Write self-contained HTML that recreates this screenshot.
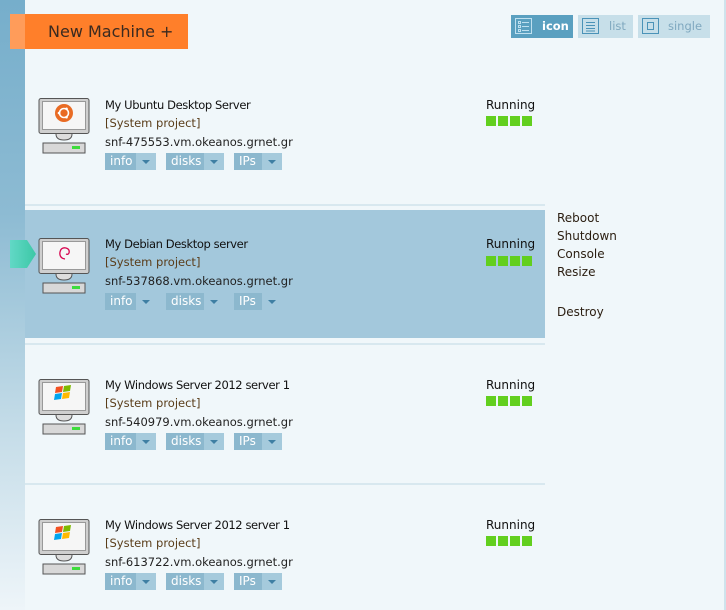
<!DOCTYPE html>
<html><head><meta charset="utf-8"><style>
*{margin:0;padding:0;box-sizing:border-box}
html,body{width:726px;height:610px;overflow:hidden}
body{background:#f0f7fa;font-family:"DejaVu Sans","Liberation Sans",sans-serif;position:relative;color:#222}
.side{position:absolute;left:0;top:0;width:25px;height:610px;background:linear-gradient(#76aecb 0%,#8dbbd3 35%,#c4dce8 70%,#eef5f9 100%)}
.rline{position:absolute;right:0;top:0;width:2px;height:610px;background:#cfe3ec}
.new{position:absolute;left:10px;top:14px;width:178px;height:35px;background:#ff7f2a;color:#3a2a20;font-size:16px;line-height:35px;padding-left:38px}
.new:before{content:"";position:absolute;left:0;top:0;width:15px;height:35px;background:#ff9c5a}
.vb{position:absolute;top:15px;height:23px;font-size:11.5px;line-height:23px;color:#7fa8bf}
.vb svg{position:absolute;left:4px;top:3px}
.sep{position:absolute;left:25px;width:520px;height:2px;background:#d8e8ef}
.row{position:absolute;left:25px;width:520px;height:128px}
.hl{background:#a3c8dc}
.mon{position:absolute;left:13px;top:28px}
.name{position:absolute;left:80px;top:27px;font-size:11.5px;letter-spacing:-0.4px;color:#111}
.proj{position:absolute;left:80px;top:45px;font-size:11.5px;color:#5a3d1a}
.host{position:absolute;left:80px;top:64px;font-size:11.5px;color:#222}
.b{position:absolute;top:82px;height:17px;font-size:12px;line-height:17px;color:#fff}
.b .l{position:absolute;left:0;top:0;height:17px;background:#8cb8ce;padding-left:5px}
.b .a{position:absolute;top:0;height:17px;width:20px;background:#a5cadc}
.b .a:after{content:"";position:absolute;left:6px;top:7px;border-left:4px solid transparent;border-right:4px solid transparent;border-top:4px solid #3f7fa3}
.hl .b .a{background:transparent}
.run{position:absolute;left:461px;top:27px;font-size:12px;color:#111}
.sq{position:absolute;left:461px;top:45px;width:46px;height:10px;background:repeating-linear-gradient(90deg,#62cf1e 0 10px,transparent 10px 12px)}
.menu{position:absolute;left:557px;font-size:12px;color:#2a1d10}
.ptr{position:absolute;left:10px;top:240px;width:26px;height:28px;z-index:5;background:linear-gradient(90deg,#62d8c6,#3cc8a6);clip-path:polygon(0 0,17px 0,26px 14px,17px 28px,0 28px)}
</style></head><body>
<div class="side"></div><div class="rline"></div>
<div class="new">New Machine +</div>
<div class="vb" style="left:511px;width:62px;background:#5aa0c0;color:#fff;font-weight:bold;padding-left:31px">icon<svg width="18" height="17"><rect x=".5" y=".5" width="16" height="15" fill="none" stroke="#bfe0ef"/><g fill="none" stroke="#bfe0ef"><rect x="3.5" y="3.5" width="2" height="2"/><rect x="3.5" y="7.5" width="2" height="2"/><rect x="3.5" y="11.5" width="2" height="2"/><path d="M7 4.5h7M7 8.5h7M7 12.5h7"/></g></svg></div>
<div class="vb" style="left:578px;width:55px;background:#c7dfe9;padding-left:31px">list<svg width="18" height="17"><rect x=".5" y=".5" width="16" height="15" fill="none" stroke="#4b93b8"/><path d="M4 4.5h9M4 7.5h9M4 10.5h9M4 13h9" stroke="#4b93b8"/></svg></div>
<div class="vb" style="left:638px;width:72px;background:#c7dfe9;padding-left:30px">single<svg width="18" height="17"><rect x=".5" y=".5" width="16" height="15" fill="none" stroke="#4b93b8"/><rect x="5.5" y="4.5" width="6" height="7" fill="none" stroke="#4b93b8"/></svg></div>

<div class="sep" style="top:204px"></div>
<div class="sep" style="top:343px"></div>
<div class="sep" style="top:483px"></div>
<div class="ptr"></div>

<div class="row" style="top:71px">
<svg class="mon" style="top:27px" width="52" height="56"><rect x="1" y=".5" width="50" height="35" rx="2" fill="#cfcfcf" stroke="#555"/><rect x="4.5" y="3.5" width="43" height="28" fill="#f6f6f6" stroke="#999"/><path d="M18 36 q0 6 8 6 q8 0 8-6" fill="#ddd" stroke="#555"/><rect x="5" y="45" width="42" height="10" fill="#d8d8d8" stroke="#555"/><rect x="34" y="48" width="8" height="3" fill="#3ddc3d"/><circle cx="26" cy="15" r="9" fill="#e96b24"/><circle cx="26" cy="15" r="4.5" fill="none" stroke="#fff" stroke-width="1.6"/><circle cx="21" cy="15" r="1.3" fill="#fff"/><circle cx="28.5" cy="10.8" r="1.3" fill="#fff"/><circle cx="28.5" cy="19.2" r="1.3" fill="#fff"/></svg>
<div class="name">My Ubuntu Desktop Server</div><div class="proj">[System project]</div><div class="host">snf-475553.vm.okeanos.grnet.gr</div>
<div class="b" style="left:80px"><span class="l" style="width:31px">info</span><span class="a" style="left:31px"></span></div>
<div class="b" style="left:141px"><span class="l" style="width:38px">disks</span><span class="a" style="left:38px"></span></div>
<div class="b" style="left:209px"><span class="l" style="width:28px">IPs</span><span class="a" style="left:28px"></span></div>
<div class="run">Running</div><div class="sq"></div></div>

<div class="row hl" style="top:210px">
<svg class="mon" width="52" height="56"><rect x="1" y=".5" width="50" height="35" rx="2" fill="#cfcfcf" stroke="#555"/><rect x="4.5" y="3.5" width="43" height="28" fill="#f6f6f6" stroke="#999"/><path d="M18 36 q0 6 8 6 q8 0 8-6" fill="#ddd" stroke="#555"/><rect x="5" y="45" width="42" height="10" fill="#d8d8d8" stroke="#555"/><rect x="34" y="48" width="8" height="3" fill="#3ddc3d"/><path d="M27 21 q-6 -1 -5 -7 q1 -5 6 -4 q4 1 3 5 q-1 2 -3 1" fill="none" stroke="#d70751" stroke-width="1.3"/></svg>
<div class="name">My Debian Desktop server</div><div class="proj">[System project]</div><div class="host">snf-537868.vm.okeanos.grnet.gr</div>
<div class="b" style="left:80px;top:83px"><span class="l" style="width:31px">info</span><span class="a" style="left:31px"></span></div>
<div class="b" style="left:141px;top:83px"><span class="l" style="width:38px">disks</span><span class="a" style="left:38px"></span></div>
<div class="b" style="left:209px;top:83px"><span class="l" style="width:28px">IPs</span><span class="a" style="left:28px"></span></div>
<div class="run">Running</div><div class="sq" style="top:46px"></div></div>

<div class="menu" style="top:211px">Reboot</div>
<div class="menu" style="top:229px">Shutdown</div>
<div class="menu" style="top:247px">Console</div>
<div class="menu" style="top:265px">Resize</div>
<div class="menu" style="top:305px">Destroy</div>

<div class="row" style="top:351px">
<svg class="mon" width="52" height="56"><rect x="1" y=".5" width="50" height="35" rx="2" fill="#cfcfcf" stroke="#555"/><rect x="4.5" y="3.5" width="43" height="28" fill="#f6f6f6" stroke="#999"/><path d="M18 36 q0 6 8 6 q8 0 8-6" fill="#ddd" stroke="#555"/><rect x="5" y="45" width="42" height="10" fill="#d8d8d8" stroke="#555"/><rect x="34" y="48" width="8" height="3" fill="#3ddc3d"/><path d="M18 8 l7 -1 l-1 6 l-7 1z" fill="#f25022"/><path d="M26 7 l7 -1 l-1 6 l-7 1z" fill="#7fba00"/><path d="M17 15 l7 -1 l-1 6 l-7 1z" fill="#00a4ef"/><path d="M25 14 l7 -1 l-1 6 l-7 1z" fill="#ffb900"/></svg>
<div class="name">My Windows Server 2012 server 1</div><div class="proj">[System project]</div><div class="host">snf-540979.vm.okeanos.grnet.gr</div>
<div class="b" style="left:80px"><span class="l" style="width:31px">info</span><span class="a" style="left:31px"></span></div>
<div class="b" style="left:141px"><span class="l" style="width:38px">disks</span><span class="a" style="left:38px"></span></div>
<div class="b" style="left:209px"><span class="l" style="width:28px">IPs</span><span class="a" style="left:28px"></span></div>
<div class="run">Running</div><div class="sq"></div></div>

<div class="row" style="top:491px">
<svg class="mon" width="52" height="56"><rect x="1" y=".5" width="50" height="35" rx="2" fill="#cfcfcf" stroke="#555"/><rect x="4.5" y="3.5" width="43" height="28" fill="#f6f6f6" stroke="#999"/><path d="M18 36 q0 6 8 6 q8 0 8-6" fill="#ddd" stroke="#555"/><rect x="5" y="45" width="42" height="10" fill="#d8d8d8" stroke="#555"/><rect x="34" y="48" width="8" height="3" fill="#3ddc3d"/><path d="M18 8 l7 -1 l-1 6 l-7 1z" fill="#f25022"/><path d="M26 7 l7 -1 l-1 6 l-7 1z" fill="#7fba00"/><path d="M17 15 l7 -1 l-1 6 l-7 1z" fill="#00a4ef"/><path d="M25 14 l7 -1 l-1 6 l-7 1z" fill="#ffb900"/></svg>
<div class="name">My Windows Server 2012 server 1</div><div class="proj">[System project]</div><div class="host">snf-613722.vm.okeanos.grnet.gr</div>
<div class="b" style="left:80px"><span class="l" style="width:31px">info</span><span class="a" style="left:31px"></span></div>
<div class="b" style="left:141px"><span class="l" style="width:38px">disks</span><span class="a" style="left:38px"></span></div>
<div class="b" style="left:209px"><span class="l" style="width:28px">IPs</span><span class="a" style="left:28px"></span></div>
<div class="run">Running</div><div class="sq"></div></div>
</body></html>
